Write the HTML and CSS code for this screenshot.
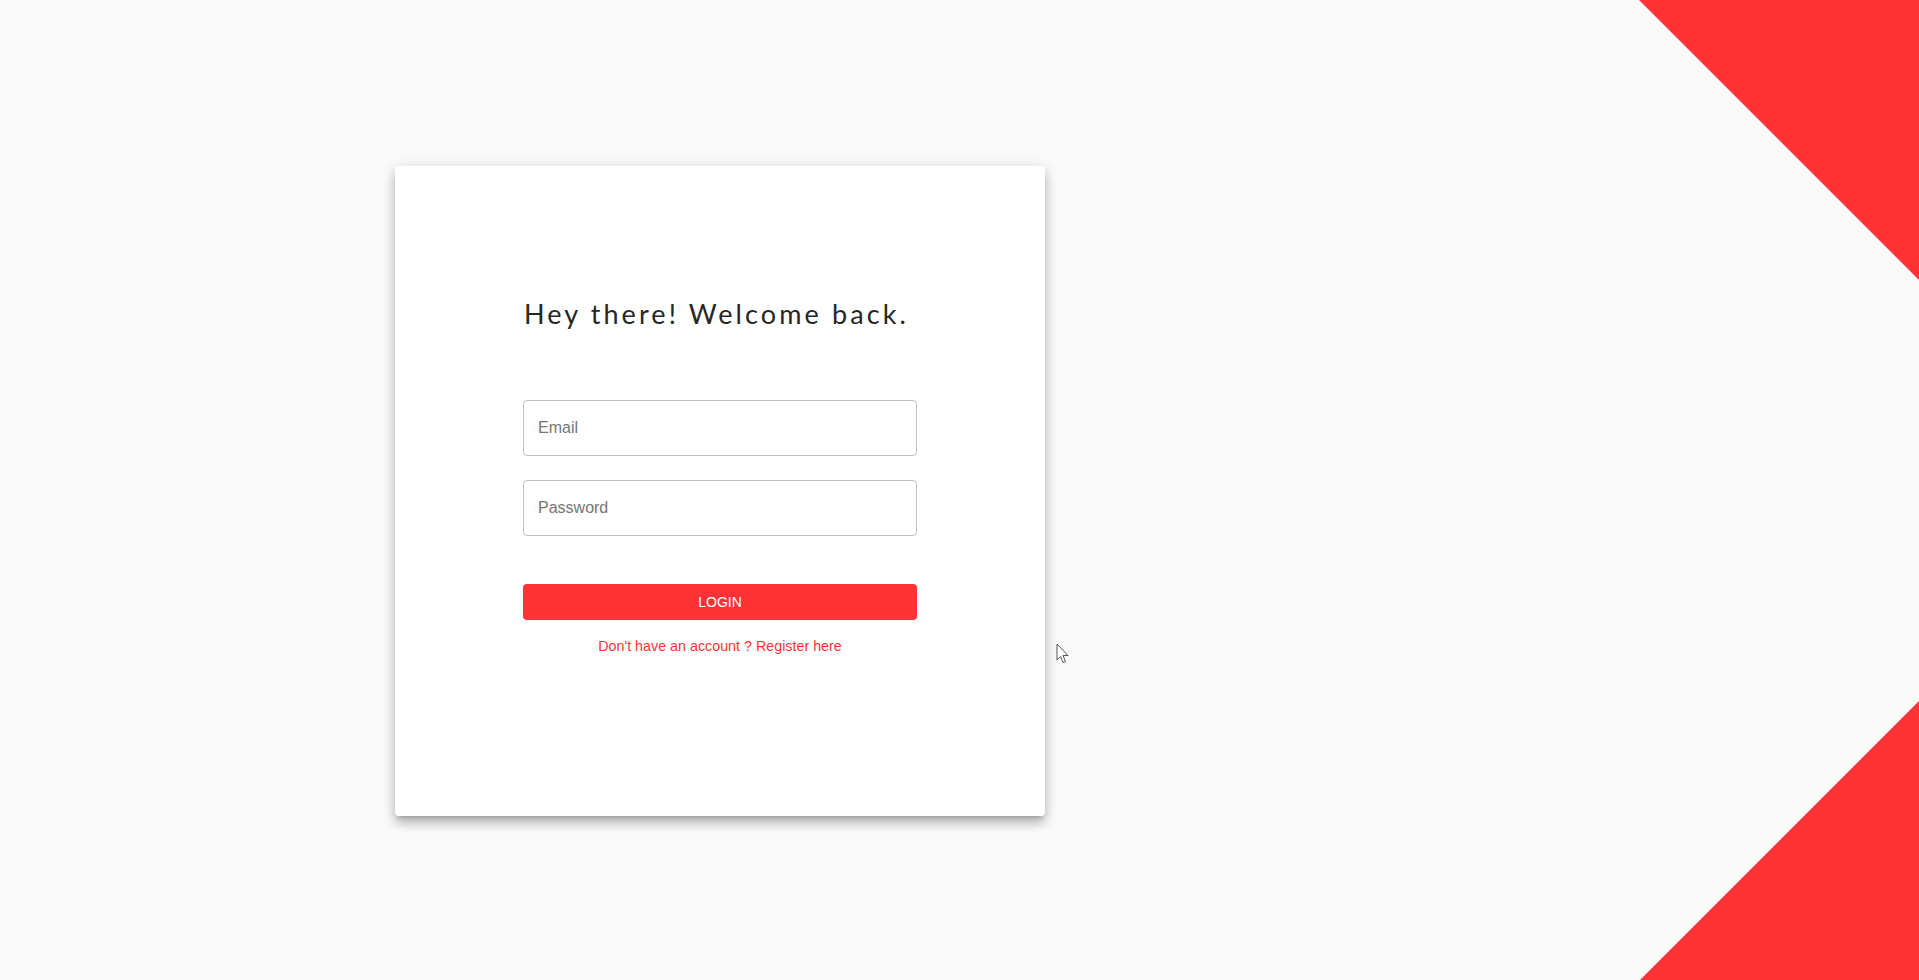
FILE: index.html
```html
<!DOCTYPE html>
<html lang="en">
<head>
<meta charset="utf-8">
<title>Login</title>
<link rel="stylesheet" href="styles.css">
</head>
<body>
<div class="page">
  <main class="main">
    <section class="card">
      <form class="form">
        <h1 class="title">Hey there! Welcome back.</h1>
        <div class="fields">
          <input class="field" type="email" placeholder="Email">
          <input class="field" type="password" placeholder="Password">
        </div>
        <button class="btn" type="button">LOGIN</button>
        <a class="link" href="#">Don't have an account ? Register here</a>
      </form>
    </section>
  </main>
  <aside class="deco">
    <div class="tri tri-top"></div>
    <div class="tri tri-bottom"></div>
  </aside>
</div>
<svg class="cursor" width="13" height="21" viewBox="0 0 13 21"><path d="M1 1 L1 17 L4.5 13.5 L7 19.5 L9.5 18.5 L7 12.5 L12 12.5 Z" fill="#fff" stroke="#555" stroke-width="1" stroke-linejoin="round"/></svg>
</body>
</html>
```
FILE: styles.css
```css
* { box-sizing: border-box; }
html, body { margin: 0; padding: 0; }
body {
  background: #fafafa;
  font-family: "Liberation Sans", Arial, sans-serif;
  width: 1919px;
  height: 980px;
  overflow: hidden;
}
.page {
  display: flex;
  width: 1919px;
  height: 980px;
}
.main {
  width: 1440px;
  height: 980px;
  display: flex;
  align-items: center;
  justify-content: center;
  padding-top: 2px;
}
.card {
  width: 650px;
  height: 650px;
  background: #fff;
  border-radius: 4px;
  box-shadow: 0 5px 5px -3px rgba(0,0,0,.2), 0 8px 10px 1px rgba(0,0,0,.14), 0 3px 14px 2px rgba(0,0,0,.12);
  display: flex;
  justify-content: center;
  padding-top: 132px;
}
.form {
  width: 394px;
  display: flex;
  flex-direction: column;
}
.title {
  margin: 0;
  font-family: Lato, "Open Sans", sans-serif;
  font-weight: 400;
  font-size: 27px;
  line-height: 32px;
  letter-spacing: 3.1px;
  color: #262626;
  padding-left: 1px;
  white-space: nowrap;
}
.fields {
  display: flex;
  flex-direction: column;
  gap: 24px;
  margin-top: 70px;
}
.field {
  height: 56px;
  width: 100%;
  border: 1px solid #c2c2c2;
  border-radius: 4px;
  padding: 0 14px;
  font-family: "Liberation Sans", Arial, sans-serif;
  font-size: 16px;
  color: #333;
  background: #fff;
  outline: none;
}
.field::placeholder { color: #757575; }
.btn {
  margin-top: 48px;
  height: 36px;
  border: none;
  border-radius: 4px;
  background: #ff3336;
  color: #fff;
  font-family: "Liberation Sans", Arial, sans-serif;
  font-size: 14px;
  padding: 0;
}
.link {
  margin-top: 16px;
  text-align: center;
  color: #ff3336;
  text-decoration: none;
  font-size: 14.3px;
  line-height: 20px;
}
.deco {
  position: relative;
  flex: 1;
  height: 980px;
}
.tri {
  position: absolute;
  right: 0;
  width: 280px;
  height: 280px;
  background: #ff3336;
}
.tri-top {
  top: 0;
  clip-path: polygon(0 0, 100% 0, 100% 100%);
}
.tri-bottom {
  bottom: 0;
  height: 279px;
  width: 279px;
  clip-path: polygon(100% 0, 100% 100%, 0 100%);
}
.cursor {
  position: absolute;
  left: 1056px;
  top: 643px;
}
```
